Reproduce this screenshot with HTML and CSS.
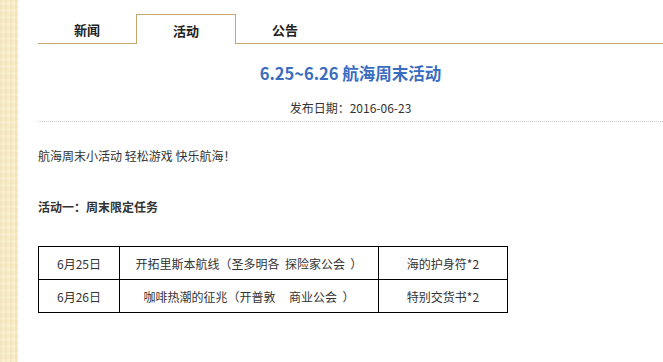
FILE: index.html
```html
<!DOCTYPE html>
<html lang="zh-CN">
<head>
  <meta charset="UTF-8" />
  <title>航海周末活动</title>
  <link rel="stylesheet" href="styles.css">
</head>
<body>
  <div class="page">
    <div class="side"></div>
    <div class="main">
      <ul class="tabs">
        <li>新闻</li>
        <li class="active">活动</li>
        <li>公告</li>
      </ul>

      <div class="head">
        <h1>6.25~6.26 航海周末活动</h1>
        <p class="date">发布日期：2016-06-23</p>
      </div>

      <div class="article">
        <p>航海周末小活动 轻松游戏 快乐航海！</p>
        <p class="sub">活动一：周末限定任务</p>
        <table>
          <tr>
            <td class="day">6月25日</td>
            <td class="task">开拓里斯本航线（圣多明各&nbsp;&nbsp;探险家公会&nbsp;&nbsp;）</td>
            <td class="prize">海的护身符*2</td>
          </tr>
          <tr>
            <td class="day">6月26日</td>
            <td class="task">咖啡热潮的征兆（开普敦&nbsp;&nbsp;&nbsp;&nbsp;&nbsp;商业公会&nbsp;&nbsp;）</td>
            <td class="prize">特别交货书*2</td>
          </tr>
        </table>
      </div>
    </div>
  </div>
</body>
</html>
```

FILE: styles.css
```css
body {
  margin: 0;
  font-family: "Noto Sans CJK SC", "Noto Sans", sans-serif;
  color: #333;
  background: #fff;
}
.page {
  display: flex;
  min-height: 362px;
}
.side {
  width: 18px;
  flex-shrink: 0;
  background-color: #f7ebc6;
  background-image:
    repeating-linear-gradient(90deg, rgba(220,195,140,0.18) 0 2px, transparent 2px 5px),
    repeating-linear-gradient(0deg, rgba(255,250,225,0.35) 0 3px, transparent 3px 7px);
}
.main {
  flex: 1;
  padding-left: 20px;
}
.tabs {
  display: flex;
  list-style: none;
  margin: 14px 0 0;
  padding: 0;
  border-bottom: 1px solid #c6a66a;
}
.tabs li {
  box-sizing: border-box;
  width: 98px;
  height: 29px;
  line-height: 29px;
  text-align: center;
  font-size: 13px;
  font-weight: bold;
  color: #222;
  border: 1px solid transparent;
  border-bottom: 0;
}
.tabs li.active {
  width: 100px;
  height: 30px;
  line-height: 31px;
  border-color: #c6a66a;
  background: #fff;
  margin-bottom: -1px;
}
.head {
  text-align: center;
  border-bottom: 1px dotted #ccc;
  padding: 14px 0 3px;
}
.head h1 {
  margin: 0;
  font-size: 16.5px;
  line-height: 30px;
  color: #3a6cc0;
}
.date {
  margin: 10px 0 0;
  font-size: 12px;
  line-height: 20px;
}
.article {
  font-size: 12px;
  padding-top: 24px;
}
.article p {
  margin: 0;
  line-height: 20px;
}
.article .sub {
  margin-top: 31px;
  font-weight: bold;
}
table {
  margin-top: 29px;
  border-collapse: collapse;
}
td {
  border: 1px solid #000;
  height: 32px;
  padding: 0;
  text-align: center;
  font-size: 12px;
}
.day { width: 80px; }
.task { width: 258px; }
.prize { width: 128px; }
```
